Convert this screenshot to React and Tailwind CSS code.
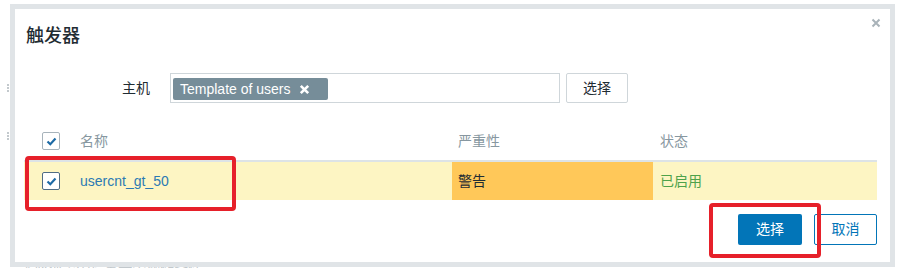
import React from 'react';

// Zabbix-style "触发器" picker dialog, with red annotation boxes
function Check({ dark }) {
  return (
    <span
      className={`flex items-center justify-center w-[18px] h-[18px] bg-white rounded-[2px] border ${
        dark ? 'border-[#4f6c84]' : 'border-[#a7b3bb]'
      }`}
    >
      <svg width="11" height="9" viewBox="0 0 11 9">
        <path d="M1.5 4.5 L4.3 7.2 L9.5 1.6" fill="none" stroke="#1d6aa5" strokeWidth="2.2" />
      </svg>
    </span>
  );
}

export default function App() {
  return (
    <div className="relative w-[905px] h-[279px] bg-white overflow-hidden font-['Liberation_Sans','Noto_Sans_CJK_SC',sans-serif]">
      {/* page content peeking out behind the dialog */}
      <div className="absolute left-[25px] top-[259px] h-[9px] overflow-hidden text-[14px] leading-[18px] text-[#c2c8cc]">
        * 必须至少设置一个操作条件
      </div>
      <div className="absolute left-[7px] top-[84px] w-[2px] h-[8px] border-l-2 border-dotted border-[#c3c9cd]" />
      <div className="absolute left-[7px] top-[132px] w-[2px] h-[8px] border-l-2 border-dotted border-[#c3c9cd]" />

      <div className="relative pl-[10px] pt-[4px]">
        <div className="relative w-[885px] h-[263px] border-[5px] border-[#d3d9dd]/70 bg-white">
          {/* close */}
          <button className="absolute left-[855px] top-[8px] w-[12px] h-[12px] flex items-center justify-center">
            <svg width="10" height="10" viewBox="0 0 10 10">
              <path d="M1.5 1.5 L8.5 8.5 M8.5 1.5 L1.5 8.5" stroke="#a9b3b9" strokeWidth="2" />
            </svg>
          </button>

          {/* title */}
          <div className="mt-[15px] pl-[11px] h-[24px] text-[18px] leading-[24px] font-medium text-[#1f2c33]">
            触发器
          </div>

          {/* host row */}
          <div className="mt-[25px] flex items-center h-[30px]">
            <span className="ml-[107px] w-[48px] text-[14px] text-[#1f2c33]">主机</span>
            <div className="w-[390px] h-[30px] border border-[#cfd6da] bg-white px-[2px] pt-[3px]">
              <span className="inline-flex items-center h-[22px] w-[155px] bg-[#768d99] rounded-[2px] pl-[7px] text-white text-[14px] leading-[22px]">
                Template of users
                <svg className="ml-[8px]" width="11" height="11" viewBox="0 0 11 11">
                  <path d="M1.8 1.8 L9.2 9.2 M9.2 1.8 L1.8 9.2" stroke="#ffffff" strokeWidth="2.6" />
                </svg>
              </span>
            </div>
            <button className="ml-[6px] w-[62px] h-[30px] border border-[#cfd6da] bg-white rounded-[2px] text-[14px] text-[#1f2c33]">
              选择
            </button>
          </div>

          {/* table */}
          <div className="ml-[9px] w-[853px] mt-[19px] text-[14px]">
            <div className="flex items-center h-[40px] border-b-2 border-[#dde3e6] text-[#8797a0]">
              <div className="w-[428px] flex items-center pl-[18px] gap-[20px]">
                <Check />
                <span>名称</span>
              </div>
              <div className="w-[201px] pl-[6px]">严重性</div>
              <div className="flex-1 pl-[7px]">状态</div>
            </div>
            <div className="flex items-stretch h-[38px] bg-[#fdf5c3]">
              <div className="w-[428px] flex items-center pl-[18px] gap-[20px]">
                <Check dark />
                <span className="text-[#2b7ab3]">usercnt_gt_50</span>
              </div>
              <div className="w-[201px] pl-[6px] flex items-center bg-[#ffc859] text-[#1f2c33]">警告</div>
              <div className="flex-1 pl-[7px] flex items-center text-[#4ea24b]">已启用</div>
            </div>
          </div>

          {/* footer buttons */}
          <div className="mt-[14px] mr-[13px] flex justify-end gap-[12px]">
            <button className="w-[64px] h-[31px] bg-[#0275b8] rounded-[2px] text-white text-[14px]">选择</button>
            <button className="w-[63px] h-[31px] border border-[#0275b8] bg-white rounded-[2px] text-[#0275b8] text-[14px]">
              取消
            </button>
          </div>

          {/* red annotation boxes */}
          <div className="absolute left-[10px] top-[147px] w-[211px] h-[55px] border-4 border-[#e6202a] rounded-[4px]" />
          <div className="absolute left-[694px] top-[194px] w-[112px] h-[55px] border-4 border-[#e6202a] rounded-[4px]" />
        </div>
      </div>
    </div>
  );
}
